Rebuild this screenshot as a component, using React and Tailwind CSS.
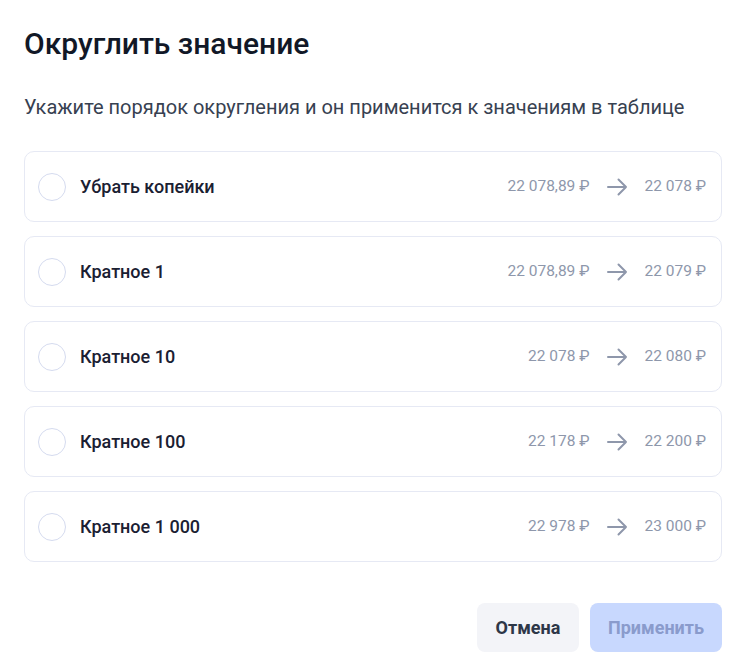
const options = [
  { label: 'Убрать копейки', from: '22 078,89 ₽', to: '22 078 ₽' },
  { label: 'Кратное 1', from: '22 078,89 ₽', to: '22 079 ₽' },
  { label: 'Кратное 10', from: '22 078 ₽', to: '22 080 ₽' },
  { label: 'Кратное 100', from: '22 178 ₽', to: '22 200 ₽' },
  { label: 'Кратное 1 000', from: '22 978 ₽', to: '23 000 ₽' },
]

function Arrow() {
  return (
    <svg width="22" height="20" viewBox="0 0 22 20" fill="none" stroke="#8e97ab" strokeWidth="2" strokeLinecap="round" strokeLinejoin="round">
      <path d="M2 10h18M12.5 2.5l7.5 7.5-7.5 7.5" />
    </svg>
  )
}

export default function App() {
  return (
    <div className="w-[744px] h-[672px] bg-white pl-6 pr-[22px] pt-[26px] font-['Roboto',sans-serif]">
      <h1 className="text-[30px] leading-[36px] font-medium text-[#111827]">Округлить значение</h1>
      <p className="mt-[31px] text-[20px] leading-[28px] text-[#374151]">
        Укажите порядок округления и он применится к значениям в таблице
      </p>
      <div className="mt-[30px] flex flex-col gap-[14px]">
        {options.map((o) => (
          <div
            key={o.label}
            className="h-[71px] flex items-center rounded-[10px] border border-[#e6e9f4] pl-[13px] pr-[15px]"
          >
            <div className="w-[28px] h-[28px] rounded-full border-[1.5px] border-[#d5dbef]" />
            <div className="ml-[14px] text-[18px] font-medium text-[#1a2032]">{o.label}</div>
            <div className="ml-auto flex items-center text-[15.5px] text-[#8e97ab]">
              <span>{o.from}</span>
              <span className="ml-[17px] mr-[16px] flex"><Arrow /></span>
              <span>{o.to}</span>
            </div>
          </div>
        ))}
      </div>
      <div className="mt-[41px] flex justify-end gap-[11px]">
        <button className="h-[49px] w-[102px] rounded-[8px] bg-[#f3f4f8] text-[18px] font-bold text-[#2d3748]">
          Отмена
        </button>
        <button className="h-[49px] w-[132px] rounded-[8px] bg-[#c8d8fe] text-[18px] font-bold text-[#8a9bcc]">
          Применить
        </button>
      </div>
    </div>
  )
}
